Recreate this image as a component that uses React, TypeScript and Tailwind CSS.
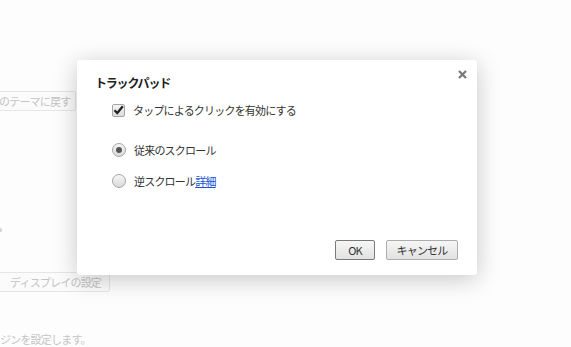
export default function App() {
  const font = { fontFamily: '"Noto Sans CJK JP", "Liberation Sans", sans-serif' }

  return (
    <div className="relative w-[571px] h-[347px] overflow-hidden bg-[#fdfdfd] text-[11px] tracking-[-0.8px]" style={font}>
      {/* faded settings page behind the dialog */}
      <div className="flex flex-col text-[#c4c4c4] whitespace-nowrap">
        <div className="h-[91px]" />
        <div className="ml-[-24px] w-[100px] h-[20px] border border-[#e6e6e6] rounded-[2px] bg-[#fbfbfb] flex items-center pl-[22px] leading-none">
          のテーマに戻す
        </div>
        <div className="h-[117px]" />
        <div className="w-[3px] h-[4px] rounded-full bg-[#d4d4d4] ml-[-1px]" />
        <div className="h-[40px]" />
        <div className="w-[111px] h-[20px] border border-[#e6e6e6] rounded-[2px] bg-[#fbfbfb] flex items-center pl-[10px] leading-none ml-[-1px]">
          ディスプレイの設定
        </div>
        <div className="h-[42px]" />
        <div className="leading-none">ジンを設定します。</div>
      </div>

      {/* dialog */}
      <div className="absolute left-[77px] top-[60px] w-[400px] h-[215px] bg-white rounded-[3px] shadow-[0_4px_23px_rgba(0,0,0,0.22)] text-[#333]">
        <svg className="absolute left-[381px] top-[10px]" width="9" height="9" viewBox="0 0 9 9">
          <path d="M1 1 L8 8 M8 1 L1 8" stroke="#777" strokeWidth="2.2" />
        </svg>
        <div className="flex flex-col px-[18px] pt-[15px]">
          <div className="text-[12px] tracking-[-1.2px] font-bold leading-[14px] mt-[1px] text-[#222]">トラックパッド</div>

          <div className="flex items-center gap-[8px] ml-[17px] mt-[13px] h-[14px]">
            <div className="w-[13px] h-[13px] border border-[#a5a5a5] rounded-[2px] bg-gradient-to-b from-[#f5f5f5] to-[#dcdcdc] flex items-center justify-center">
              <svg width="11" height="10" viewBox="0 0 11 10">
                <path d="M1.5 5.2 L4.3 8 L9.8 1.3" fill="none" stroke="#222" strokeWidth="2.3" />
              </svg>
            </div>
            <span className="leading-none">タップによるクリックを有効にする</span>
          </div>

          <div className="flex items-center gap-[8px] ml-[17px] mt-[26px] h-[14px]">
            <div className="w-[14px] h-[14px] rounded-full border border-[#a5a5a5] bg-gradient-to-b from-[#f7f7f7] to-[#dadada] flex items-center justify-center">
              <div className="w-[6px] h-[6px] rounded-full bg-[#555]" />
            </div>
            <span className="leading-none">従来のスクロール</span>
          </div>

          <div className="flex items-center gap-[8px] ml-[17px] mt-[17px] h-[14px]">
            <div className="w-[14px] h-[14px] rounded-full border border-[#a5a5a5] bg-gradient-to-b from-[#f7f7f7] to-[#dadada]" />
            <span className="leading-none">
              逆スクロール<span className="text-[#1a52d6] underline">詳細</span>
            </span>
          </div>

          <div className="flex justify-end gap-[11px] mt-[52px] mr-[1px]">
            <button className="w-[40px] h-[20px] border border-[#7a7a7a] rounded-[2px] bg-gradient-to-b from-[#f6f6f6] to-[#e2e2e2] leading-none text-[#333]">
              OK
            </button>
            <button className="w-[72px] h-[20px] border border-[#acacac] rounded-[2px] bg-gradient-to-b from-[#f6f6f6] to-[#e2e2e2] leading-none text-[#333]">
              キャンセル
            </button>
          </div>
        </div>
      </div>
    </div>
  )
}
